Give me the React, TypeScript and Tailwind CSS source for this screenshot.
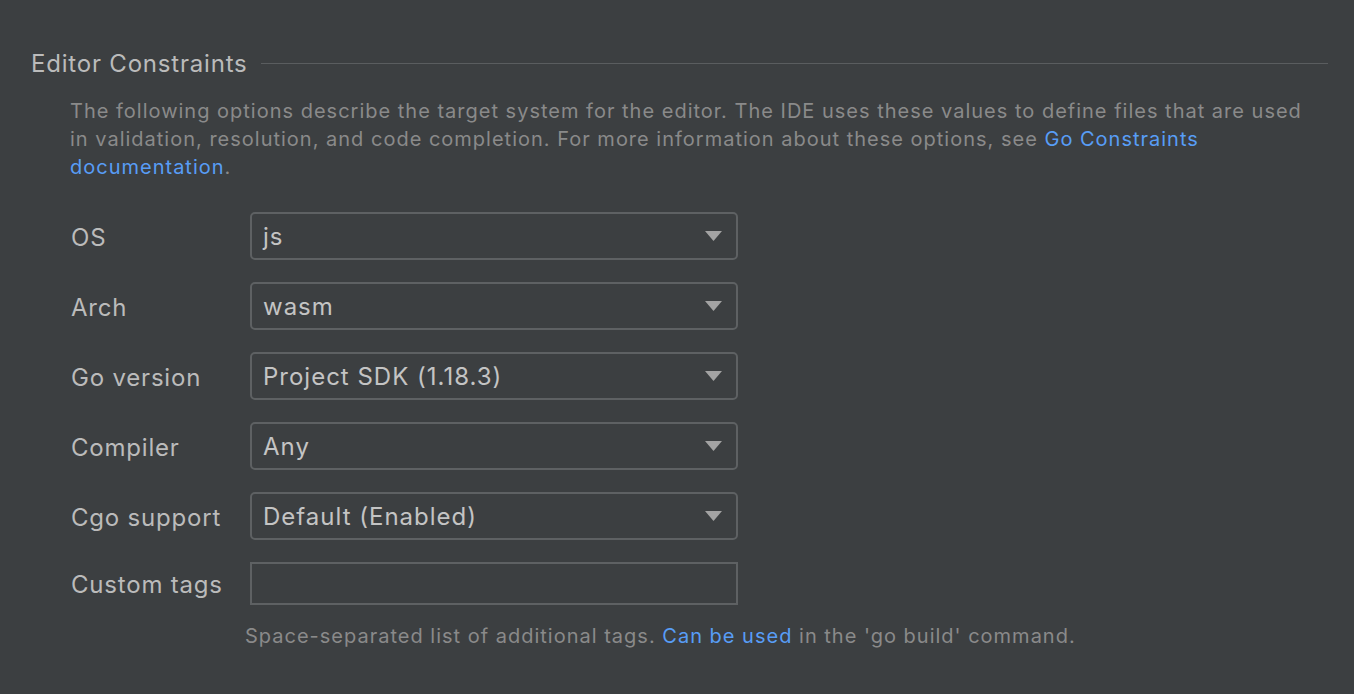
import React from "react";

const rows = [
  { label: "OS", value: "js" },
  { label: "Arch", value: "wasm" },
  { label: "Go version", value: "Project SDK (1.18.3)" },
  { label: "Compiler", value: "Any" },
  { label: "Cgo support", value: "Default (Enabled)" },
];

function Caret() {
  return (
    <svg width="17" height="10" viewBox="0 0 17 10" className="shrink-0">
      <path d="M0 0 H17 L8.5 10 Z" fill="#a3a3a3" />
    </svg>
  );
}

export default function App() {
  return (
    <div
      className="h-[694px] w-full bg-[#3c3f41] text-[#bbbbbb] overflow-hidden"
      style={{ fontFamily: "Inter, 'Noto Sans', sans-serif" }}
    >
      {/* Section header */}
      <div className="flex items-center pl-[31px] pr-[26px] pt-[48px]">
        <span className="text-[24px] leading-[32px] tracking-[0.8px]">Editor Constraints</span>
        <div className="ml-[13px] mb-[2px] h-px flex-1 bg-[#5a5d5f]" />
      </div>

      <p className="mt-[17px] pl-[70px] text-[20px] leading-[28px] tracking-[1px] text-[#8a8a8a]">
        The following options describe the target system for the editor. The IDE uses these values to define files that are used
        <br />
        in validation, resolution, and code completion. For more information about these options, see{" "}
        <span className="text-[#589df6]">Go Constraints</span>
        <br />
        <span className="text-[#589df6]">documentation</span>.
      </p>

      <div className="mt-[31px] flex flex-col gap-[22px] pl-[71px]">
        {rows.map((r) => (
          <div key={r.label} className="flex items-center">
            <span className="w-[179px] pt-[3px] text-[24px] tracking-[0.8px]">{r.label}</span>
            <div className="flex h-[48px] w-[488px] items-center justify-between rounded-[5px] border-2 border-[#5e6163] pl-[11px] pr-[14px]">
              <span className="pt-[2px] text-[24px] tracking-[1px] text-[#c4c4c4]">{r.value}</span>
              <Caret />
            </div>
          </div>
        ))}
        <div className="flex items-center">
          <span className="w-[179px] pt-[3px] text-[24px] tracking-[0.8px]">Custom tags</span>
          <div className="h-[43px] w-[488px] border-2 border-[#5e6163]" />
        </div>
      </div>

      <p className="mt-[17px] pl-[245px] text-[20px] leading-[28px] tracking-[1px] text-[#8a8a8a]">
        Space-separated list of additional tags. <span className="text-[#589df6]">Can be used</span> in the 'go build' command.
      </p>
    </div>
  );
}
